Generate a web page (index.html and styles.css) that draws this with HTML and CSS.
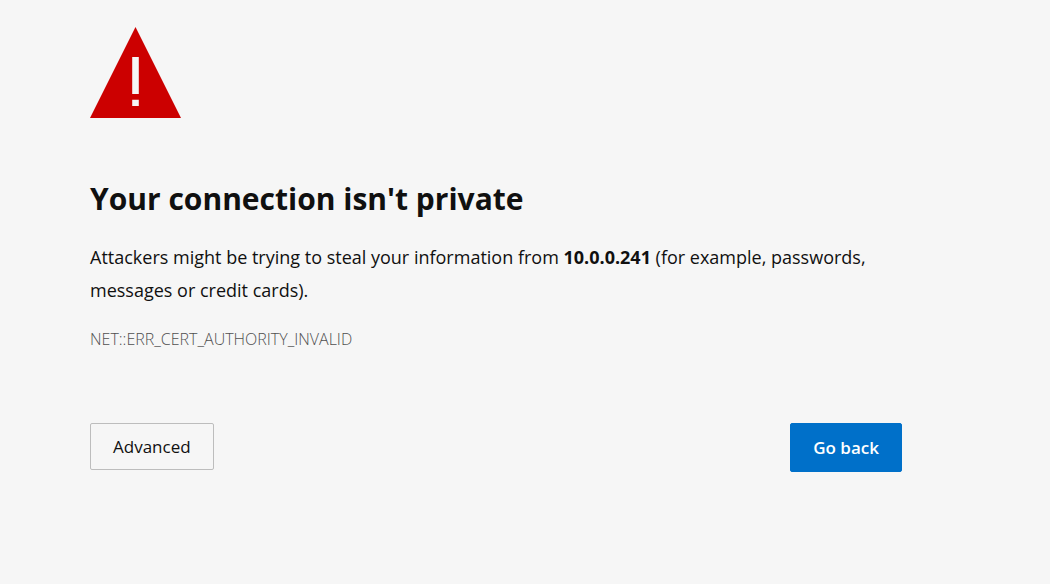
FILE: index.html
```html
<!DOCTYPE html>
<html lang="en">
<head>
<meta charset="utf-8">
<meta name="viewport" content="width=device-width, initial-scale=1">
<title>Privacy error</title>
<link rel="stylesheet" href="styles.css">
</head>
<body>
<main class="page">
  <svg class="warning" viewBox="0 0 91 91" role="img" aria-label="Warning">
    <path fill="#cc0000" d="M45.5 0 91 91H0z"/>
    <path fill="#f6f6f6" d="M42.2 30h6.6v37h-6.6zM42.2 72.700h6.600v6.300h-6.600z"/>
  </svg>
  <h1 class="title">Your connection isn't private</h1>
  <p class="message">Attackers might be trying to steal your information from <strong>10.0.0.241</strong> (for example, passwords, messages or credit cards).</p>
  <p class="code">NET::ERR_CERT_AUTHORITY_INVALID</p>
  <div class="actions">
    <button class="button" type="button">Advanced</button>
    <button class="button primary" type="button">Go back</button>
  </div>
</main>
</body>
</html>
```
FILE: styles.css
```css
* { box-sizing: border-box; }
body {
  margin: 0;
  background: #f6f6f6;
  color: #101010;
  font-family: "Segoe UI", "Open Sans", "Noto Sans", sans-serif;
}
.page {
  max-width: 902px;
  padding: 27px 0 40px 90px;
}
.warning {
  display: block;
  width: 91px;
  height: 91px;
}
.title {
  margin: 58px 0 0;
  font-size: 30px;
  line-height: 46px;
  font-weight: 700;
}
.message {
  margin: 19px 0 0;
  font-size: 18px;
  line-height: 33px;
}
.message strong { font-weight: 700; }
.code {
  margin: 20px 0 0;
  color: #505050;
  font-size: 16px;
  line-height: 24px;
  font-weight: 300;
}
.actions {
  display: flex;
  justify-content: space-between;
  align-items: flex-start;
  margin-top: 72px;
}
.button {
  padding: 0 22px;
  border: 1px solid #bdbdbd;
  border-radius: 2px;
  background: transparent;
  color: #101010;
  font: inherit;
  font-size: 17px;
  line-height: 45px;
}
.primary {
  border-color: #0070c9;
  background: #0070c9;
  color: #fff;
  font-weight: 600;
  line-height: 47px;
}
```
